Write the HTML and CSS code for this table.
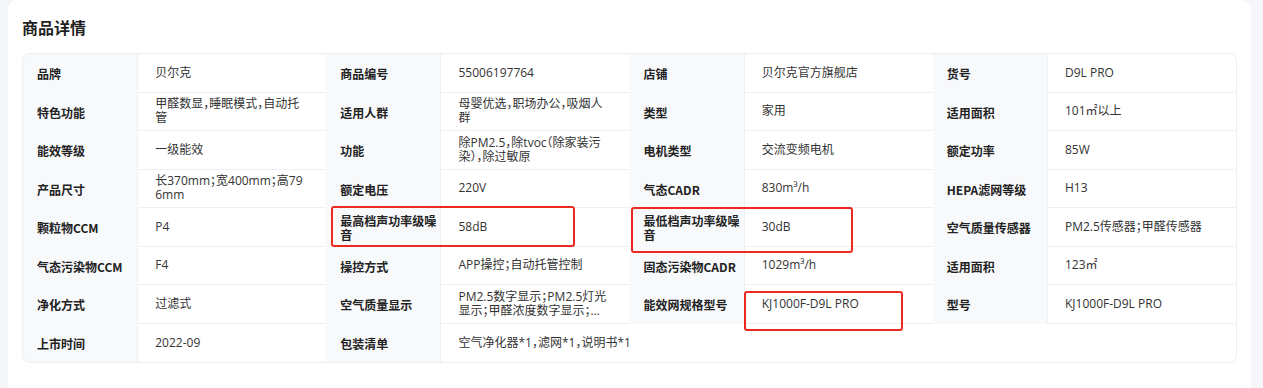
FILE: index.html
```html
<!DOCTYPE html>
<html lang="zh-CN">
<head>
<meta charset="utf-8">
<title>商品详情</title>
<link rel="stylesheet" href="styles.css">
</head>
<body>
<div class="card">
  <h2 class="title">商品详情</h2>
  <div class="spec-wrap">
    <div class="spec">
      <div class="k">品牌</div><div class="v"><span>贝尔克</span></div>
      <div class="k">商品编号</div><div class="v"><span>55006197764</span></div>
      <div class="k">店铺</div><div class="v"><span>贝尔克官方旗舰店</span></div>
      <div class="k">货号</div><div class="v"><span>D9L PRO</span></div>

      <div class="k">特色功能</div><div class="v"><span>甲醛数显，睡眠模式，自动托管</span></div>
      <div class="k">适用人群</div><div class="v"><span>母婴优选，职场办公，吸烟人群</span></div>
      <div class="k">类型</div><div class="v"><span>家用</span></div>
      <div class="k">适用面积</div><div class="v"><span>101㎡以上</span></div>

      <div class="k">能效等级</div><div class="v"><span>一级能效</span></div>
      <div class="k">功能</div><div class="v"><span>除PM2.5，除tvoc（除家装污染），除过敏原</span></div>
      <div class="k">电机类型</div><div class="v"><span>交流变频电机</span></div>
      <div class="k">额定功率</div><div class="v"><span>85W</span></div>

      <div class="k">产品尺寸</div><div class="v"><span>长370mm；宽400mm；高796mm</span></div>
      <div class="k">额定电压</div><div class="v"><span>220V</span></div>
      <div class="k">气态CADR</div><div class="v"><span>830m³/h</span></div>
      <div class="k">HEPA滤网等级</div><div class="v"><span>H13</span></div>

      <div class="k">颗粒物CCM</div><div class="v"><span>P4</span></div>
      <div class="k">最高档声功率级噪音</div><div class="v"><span>58dB</span></div>
      <div class="k">最低档声功率级噪音</div><div class="v"><span>30dB</span></div>
      <div class="k">空气质量传感器</div><div class="v"><span>PM2.5传感器；甲醛传感器</span></div>

      <div class="k">气态污染物CCM</div><div class="v"><span>F4</span></div>
      <div class="k">操控方式</div><div class="v"><span>APP操控；自动托管控制</span></div>
      <div class="k">固态污染物CADR</div><div class="v"><span>1029m³/h</span></div>
      <div class="k">适用面积</div><div class="v"><span>123㎡</span></div>

      <div class="k">净化方式</div><div class="v"><span>过滤式</span></div>
      <div class="k">空气质量显示</div><div class="v"><span class="clamp">PM2.5数字显示；PM2.5灯光显示；甲醛浓度数字显示；甲醛浓度灯光显示</span></div>
      <div class="k">能效网规格型号</div><div class="v"><span>KJ1000F-D9L PRO</span></div>
      <div class="k">型号</div><div class="v"><span>KJ1000F-D9L PRO</span></div>

      <div class="k">上市时间</div><div class="v last"><span>2022-09</span></div>
      <div class="k">包装清单</div><div class="v last wide"><span>空气净化器*1，滤网*1，说明书*1</span></div>
    </div>
    <div class="mark mark-1"></div>
    <div class="mark mark-2"></div>
    <div class="mark mark-3"></div>
  </div>
</div>
</body>
</html>
```
FILE: styles.css
```css
html, body {
  margin: 0;
  padding: 0;
}
body {
  background: #f5f6fa;
  font-family: "Noto Sans CJK SC", "Noto Sans", sans-serif;
  color: #333;
  height: 388px;
  overflow: hidden;
}
.card {
  margin-left: 8px;
  width: 1243px;
  box-sizing: border-box;
  background: #fff;
  border-radius: 9px;
  padding: 14px 14px 40px;
  min-height: 420px;
}
.title {
  margin: 2px 0 15px;
  font-size: 16px;
  line-height: 22px;
  font-weight: 700;
  color: #1f1f1f;
}
.spec-wrap {
  position: relative;
}
.spec {
  display: grid;
  grid-template-columns: repeat(4, 38fr 62fr);
  grid-auto-rows: 38.5px;
  border: 1px solid #eceef2;
  border-radius: 8px;
  overflow: hidden;
  font-size: 12px;
  line-height: 14px;
}
.k {
  display: flex;
  align-items: center;
  padding: 2px 1px 0 14px;
  background: #f8f9fb;
  font-weight: 700;
  color: #222;
  border-right: 1px solid #eef0f3;
}
.v {
  display: flex;
  align-items: center;
  padding: 0 20px 0 17px;
  border-bottom: 1px solid #eef0f3;
  min-width: 0;
  font-family: "Open Sans", "Noto Sans CJK SC", sans-serif;
}
.v span {
  word-break: break-all;
  font-feature-settings: "halt";
}
.v .clamp {
  display: -webkit-box;
  -webkit-box-orient: vertical;
  -webkit-line-clamp: 2;
  overflow: hidden;
}
.v.last {
  border-bottom: none;
}
.v.wide {
  grid-column: span 5;
}
.mark {
  position: absolute;
  border: 2px solid #ec2a22;
  border-radius: 3px;
  box-sizing: border-box;
}
.mark-1 {
  left: 309px;
  top: 153px;
  width: 244px;
  height: 41px;
}
.mark-2 {
  left: 609px;
  top: 154px;
  width: 222px;
  height: 46px;
}
.mark-3 {
  left: 722px;
  top: 238px;
  width: 159px;
  height: 40px;
}
```
